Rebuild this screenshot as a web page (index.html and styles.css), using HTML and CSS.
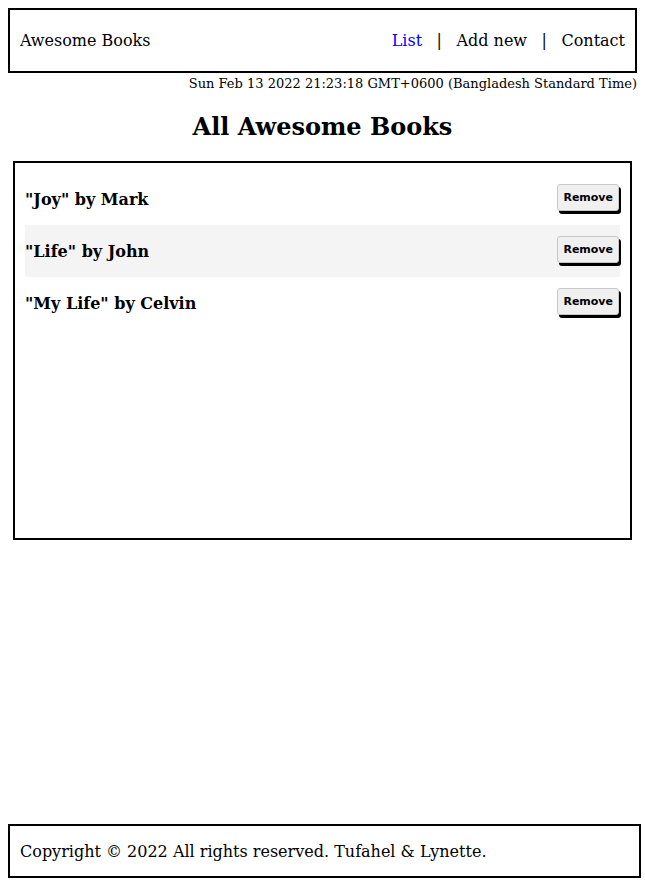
FILE: index.html
```html
<!DOCTYPE html>
<html lang="en">

<head>
  <meta charset="UTF-8">
  <meta name="viewport" content="width=device-width, initial-scale=1.0">
  <title>Awesome Books</title>
  <link rel="stylesheet" href="styles.css">
</head>

<body>
  <header class="top-bar">
    <span class="brand">Awesome Books</span>
    <nav class="nav">
      <a class="nav-link active" href="#list">List</a>
      <span class="sep">|</span>
      <a class="nav-link" href="#add">Add new</a>
      <span class="sep">|</span>
      <a class="nav-link" href="#contact">Contact</a>
    </nav>
  </header>
  <p class="date">Sun Feb 13 2022 21:23:18 GMT+0600 (Bangladesh Standard Time)</p>

  <main>
    <h1>All Awesome Books</h1>
    <div class="book-list">
      <div class="book">
        <span class="book-title">"Joy" by Mark</span>
        <button class="remove-btn">Remove</button>
      </div>
      <div class="book">
        <span class="book-title">"Life" by John</span>
        <button class="remove-btn">Remove</button>
      </div>
      <div class="book">
        <span class="book-title">"My Life" by Celvin</span>
        <button class="remove-btn">Remove</button>
      </div>
    </div>
  </main>

  <div class="footer-wrap">
    <footer class="footer">
      Copyright © 2022 All rights reserved. Tufahel &amp; Lynette.
    </footer>
  </div>
</body>

</html>
```

FILE: styles.css
```css
body {
  font-family: "DejaVu Serif", serif;
  font-size: 16px;
  color: #000;
  margin: 8px 4px 10px 8px;
  min-height: calc(100vh - 18px);
  display: flex;
  flex-direction: column;
}

.top-bar,
main,
.date {
  margin-right: 4px;
}

.top-bar {
  border: 2px solid #000;
  height: 65px;
  box-sizing: border-box;
  padding: 0 10px;
  display: flex;
  align-items: center;
  justify-content: space-between;
}

.nav {
  display: flex;
  align-items: center;
  gap: 14px;
}

.nav-link,
.sep {
  color: #000;
  text-decoration: none;
}

.sep {
  padding: 0 0.5px;
}

.nav-link.active {
  color: #0000ff;
}

.date {
  font-size: 13px;
  text-align: right;
  margin-top: 3px;
  margin-bottom: 0;
}

h1 {
  font-size: 24px;
  text-align: center;
  margin: 21px 0 20px;
}

.book-list {
  border: 2px solid #000;
  margin: 0 5px;
  height: 379px;
  box-sizing: border-box;
  padding: 10px;
}

.book {
  display: flex;
  align-items: center;
  justify-content: space-between;
  height: 52px;
  padding-right: 1px;
  font-weight: bold;
}

.book:nth-child(even) {
  background-color: #f4f4f4;
}

.remove-btn {
  font-family: "DejaVu Sans", sans-serif;
  font-size: 11px;
  font-weight: bold;
  background-color: #f0f0f0;
  border: 1px solid #c8c8c8;
  border-radius: 3px;
  padding: 6px 5px;
  box-shadow: 2px 3px 0 #000;
  margin-bottom: 4px;
}

.footer-wrap {
  margin-top: auto;
}

.footer {
  border: 2px solid #000;
  height: 54px;
  box-sizing: border-box;
  padding: 0 10px;
  display: flex;
  align-items: center;
}
```
